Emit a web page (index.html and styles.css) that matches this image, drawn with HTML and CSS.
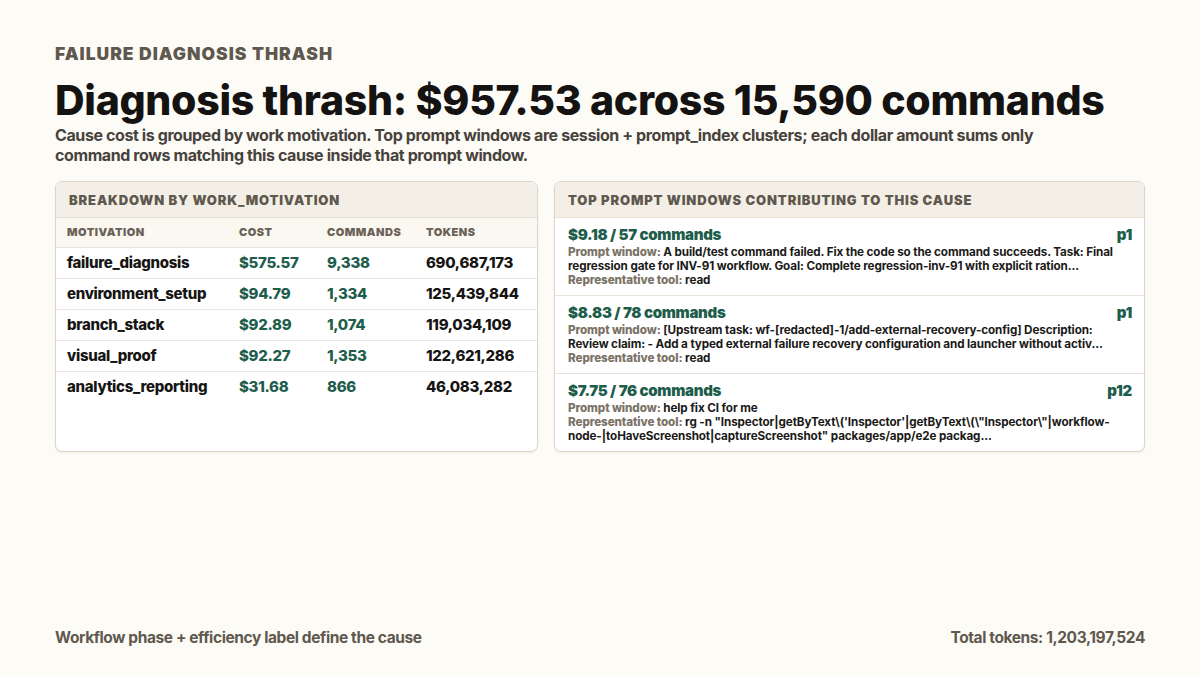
FILE: index.html
```html
<!DOCTYPE html>
<html lang="en">
<head>
<meta charset="utf-8">
<title>Failure diagnosis thrash</title>
<link rel="stylesheet" href="styles.css">
</head>
<body>
<div class="page">
  <div class="eyebrow">FAILURE DIAGNOSIS THRASH</div>
  <h1 class="title">Diagnosis thrash: $957.53 across 15,590 commands</h1>
  <p class="subtitle">Cause cost is grouped by work motivation. Top prompt windows are session + prompt_index clusters; each dollar amount sums only command rows matching this cause inside that prompt window.</p>

  <div class="cards">
    <section class="card">
      <div class="card-head">BREAKDOWN BY WORK_MOTIVATION</div>
      <table class="table">
        <colgroup>
          <col class="c1"><col class="c2"><col class="c3"><col class="c4">
        </colgroup>
        <thead>
          <tr><th>MOTIVATION</th><th>COST</th><th>COMMANDS</th><th>TOKENS</th></tr>
        </thead>
        <tbody>
          <tr><td>failure_diagnosis</td><td class="g">$575.57</td><td class="g">9,338</td><td>690,687,173</td></tr>
          <tr><td>environment_setup</td><td class="g">$94.79</td><td class="g">1,334</td><td>125,439,844</td></tr>
          <tr><td>branch_stack</td><td class="g">$92.89</td><td class="g">1,074</td><td>119,034,109</td></tr>
          <tr><td>visual_proof</td><td class="g">$92.27</td><td class="g">1,353</td><td>122,621,286</td></tr>
          <tr class="last"><td>analytics_reporting</td><td class="g">$31.68</td><td class="g">866</td><td>46,083,282</td></tr>
        </tbody>
      </table>
    </section>

    <section class="card">
      <div class="card-head">TOP PROMPT WINDOWS CONTRIBUTING TO THIS CAUSE</div>
      <div class="item">
        <div class="item-top"><span class="amt">$9.18 / 57 commands</span><span class="pidx">p1</span></div>
        <p class="line"><b class="lbl">Prompt window:</b> A build/test command failed. Fix the code so the command succeeds. Task: Final regression gate for INV-91 workflow. Goal: Complete regression-inv-91 with explicit ration...</p>
        <p class="line"><b class="lbl">Representative tool:</b> read</p>
      </div>
      <div class="item">
        <div class="item-top"><span class="amt">$8.83 / 78 commands</span><span class="pidx">p1</span></div>
        <p class="line"><b class="lbl">Prompt window:</b> [Upstream task: wf-[redacted]-1/add-external-recovery-config] Description: Review claim: - Add a typed external failure recovery configuration and launcher without activ...</p>
        <p class="line"><b class="lbl">Representative tool:</b> read</p>
      </div>
      <div class="item">
        <div class="item-top"><span class="amt">$7.75 / 76 commands</span><span class="pidx">p12</span></div>
        <p class="line"><b class="lbl">Prompt window:</b> help fix CI for me</p>
        <p class="line"><b class="lbl">Representative tool:</b> rg -n "Inspector|getByText\('Inspector'|getByText\(\"Inspector\"|workflow-node-|toHaveScreenshot|captureScreenshot" packages/app/e2e packag...</p>
      </div>
    </section>
  </div>

  <footer class="foot">
    <span>Workflow phase + efficiency label define the cause</span>
    <span>Total tokens: 1,203,197,524</span>
  </footer>
</div>
</body>
</html>
```

FILE: styles.css
```css
* { box-sizing: border-box; }
html, body { margin: 0; padding: 0; }
body {
  background: #fdfbf6;
  font-family: Inter, "Noto Sans", "DejaVu Sans", sans-serif;
  color: #161514;
}
.page {
  width: 1200px;
  height: 675px;
  padding: 44px 55px 28px;
  display: flex;
  flex-direction: column;
}
.eyebrow {
  font-size: 17.5px;
  font-weight: 900;
  letter-spacing: 1px;
  color: #5f584e;
  line-height: 20px;
}
.title {
  margin: 14px 0 0;
  font-size: 41px;
  line-height: 44px;
  font-weight: 800;
  letter-spacing: -0.3px;
  color: #141312;
}
.subtitle {
  margin: 3px 0 0;
  font-size: 16px;
  line-height: 20px;
  font-weight: 700;
  letter-spacing: -0.4px;
  color: #47423c;
  width: 1000px;
}
.cards {
  margin-top: 16px;
  display: grid;
  grid-template-columns: 483px 1fr;
  gap: 16px;
}
.card {
  background: #ffffff;
  border: 1px solid #dcd5ca;
  border-radius: 7px;
  overflow: hidden;
  box-shadow: 0 1px 2px rgba(80, 70, 50, 0.08);
}
.card-head {
  background: #f3efe6;
  border-bottom: 1px solid #e6e0d5;
  height: 36px;
  padding: 0 13px;
  display: flex;
  align-items: center;
  font-size: 13px;
  font-weight: 900;
  letter-spacing: 0.85px;
  color: #5f584e;
}
.table {
  width: 100%;
  border-collapse: collapse;
  table-layout: fixed;
}
.c1 { width: 172px; }
.c2 { width: 88px; }
.c3 { width: 99px; }
.table th {
  background: #fbf8f2;
  text-align: left;
  font-size: 11px;
  font-weight: 900;
  letter-spacing: 0.5px;
  color: #6a6257;
  height: 29px;
  padding: 0 0 0 11px;
  border-bottom: 1px solid #ebe6dd;
}
.table td {
  height: 31px;
  padding: 0 0 0 11px;
  font-size: 15px;
  font-weight: 800;
  letter-spacing: -0.3px;
  color: #161514;
  border-bottom: 1px solid #ebe6dd;
}
.table tr.last td { border-bottom: none; }
.table td.g { color: #1e5d4b; }
.item {
  padding: 8px 12px 8px 13px;
  border-bottom: 1px solid #e8e2d8;
}
.item:last-child { border-bottom: none; }
.item-top {
  display: flex;
  justify-content: space-between;
  align-items: baseline;
  font-size: 15px;
  line-height: 18px;
  font-weight: 900;
  letter-spacing: -0.3px;
  color: #1e5d4b;
  margin-bottom: 1px;
}
.line {
  margin: 0;
  font-size: 11.7px;
  line-height: 14px;
  font-weight: 700;
  letter-spacing: -0.12px;
  color: #1b1a18;
}
.lbl { color: #7b7266; font-weight: 800; }
.foot {
  margin-top: auto;
  display: flex;
  justify-content: space-between;
  font-size: 15.5px;
  line-height: 18px;
  font-weight: 700;
  letter-spacing: -0.4px;
  color: #5f584e;
}
```
